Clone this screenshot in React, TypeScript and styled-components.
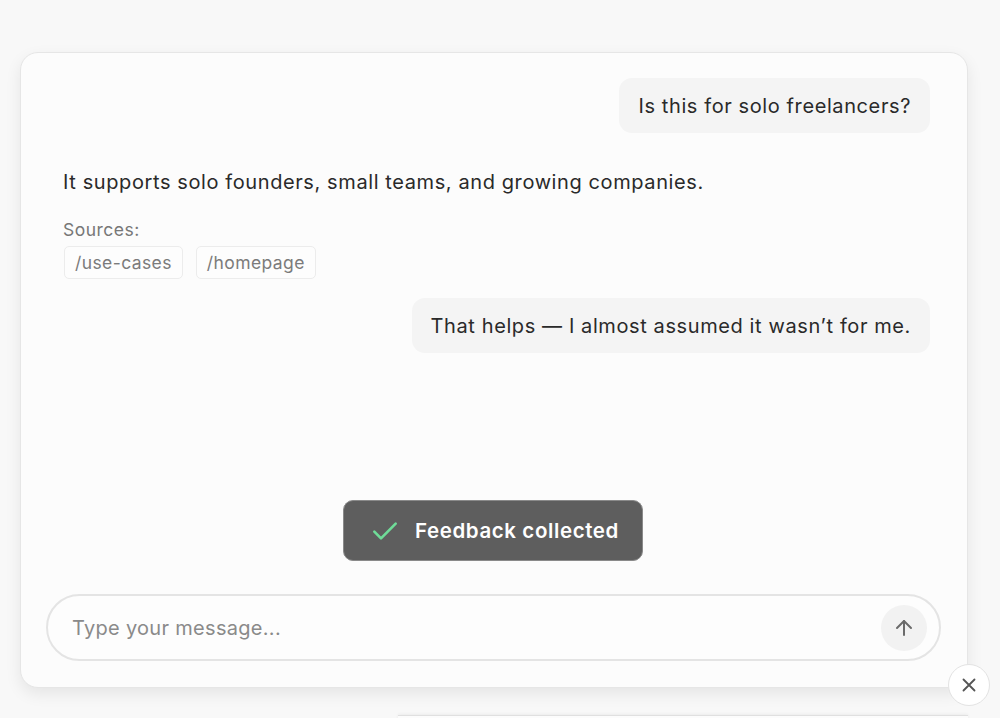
import styled, { createGlobalStyle } from 'styled-components';

const GlobalStyle = createGlobalStyle`
  html, body {
    margin: 0;
    padding: 0;
    background: #f8f8f8;
    font-family: Inter, "Liberation Sans", sans-serif;
    color: #2a2a2a;
    overflow: hidden;
  }
  * { box-sizing: border-box; }
`;

type Message =
  | { role: 'user'; text: string }
  | { role: 'assistant'; text: string; sources: string[] };

const messages: Message[] = [
  { role: 'user', text: 'Is this for solo freelancers?' },
  {
    role: 'assistant',
    text: 'It supports solo founders, small teams, and growing companies.',
    sources: ['/use-cases', '/homepage'],
  },
  { role: 'user', text: 'That helps \u2014 I almost assumed it wasn\u2019t for me.' },
];

const CheckIcon = () => (
  <svg width="32" height="32" viewBox="0 0 24 24" fill="none" stroke="#6fdc98" strokeWidth="2" strokeLinecap="round" strokeLinejoin="round">
    <path d="M4 12.5l5 5L20 6.5" />
  </svg>
);

const ArrowUpIcon = () => (
  <svg width="24" height="24" viewBox="0 0 24 24" fill="none" stroke="#6b6b6b" strokeWidth="2" strokeLinecap="round" strokeLinejoin="round">
    <path d="M12 19V5" />
    <path d="M5 12l7-7 7 7" />
  </svg>
);

const CloseIcon = () => (
  <svg width="22" height="22" viewBox="0 0 24 24" fill="none" stroke="#555" strokeWidth="2" strokeLinecap="round">
    <path d="M6 6l12 12M18 6L6 18" />
  </svg>
);

const App = () => (
  <>
    <GlobalStyle />
    <Page>
      <Widget>
        <Thread>
          {messages.map((m, i) =>
            m.role === 'user' ? (
              <UserRow key={i} $gapTop={i === 0 ? 0 : 19}>
                <UserBubble>{m.text}</UserBubble>
              </UserRow>
            ) : (
              <AssistantBlock key={i}>
                <AssistantText>{m.text}</AssistantText>
                <SourcesLabel>Sources:</SourcesLabel>
                <Chips>
                  {m.sources.map((s) => (
                    <Chip key={s}>{s}</Chip>
                  ))}
                </Chips>
              </AssistantBlock>
            ),
          )}
        </Thread>
        <ToastRow>
          <Toast>
            <CheckIcon />
            Feedback collected
          </Toast>
        </ToastRow>
        <Composer>
          <ComposerInput placeholder="Type your message..." />
          <SendButton type="button" aria-label="Send">
            <ArrowUpIcon />
          </SendButton>
        </Composer>
        <CloseButton type="button" aria-label="Close">
          <CloseIcon />
        </CloseButton>
      </Widget>
      <NextPanel />
    </Page>
  </>
);

export default App;

const Page = styled('div')`
  width: 1000px;
  height: 718px;
  padding: 52px 0 0 20px;
  position: relative;
  overflow: hidden;
`;

const Widget = styled('div')`
  position: relative;
  width: 948px;
  height: 636px;
  background: #fcfcfc;
  border: 1.5px solid #e6e6e6;
  border-radius: 18px;
  box-shadow: 0 6px 16px rgba(0, 0, 0, 0.08);
  display: flex;
  flex-direction: column;
  padding: 25px 26px 26px 25px;
`;

const Thread = styled('div')`
  display: flex;
  flex-direction: column;
  padding: 0 11px 0 17px;
  flex-grow: 1;
`;

const UserRow = styled('div')<{ $gapTop: number }>`
  display: flex;
  justify-content: flex-end;
  margin-top: ${({ $gapTop }) => $gapTop}px;
`;

const UserBubble = styled('div')`
  background: #f4f4f4;
  border-radius: 13px;
  padding: 14px 19px 13px 19px;
  font-size: 20px;
  letter-spacing: 0.6px;
  line-height: 28px;
  color: #2a2a2a;
`;

const AssistantBlock = styled('div')`
  display: flex;
  flex-direction: column;
  padding-top: 35px;
`;

const AssistantText = styled('div')`
  font-size: 20px;
  letter-spacing: 0.6px;
  line-height: 28px;
  color: #2a2a2a;
`;

const SourcesLabel = styled('div')`
  margin-top: 24px;
  font-size: 17.5px;
  letter-spacing: 0.5px;
  line-height: 20px;
  color: #777;
`;

const Chips = styled('div')`
  display: flex;
  gap: 13px;
  margin-top: 6px;
  padding-left: 1px;
`;

const Chip = styled('div')`
  border: 1px solid #ececec;
  border-radius: 5px;
  background: #fdfdfd;
  padding: 4px 10px;
  font-size: 17.5px;
  letter-spacing: 0.4px;
  line-height: 23px;
  color: #7b7b7b;
`;

const ToastRow = styled('div')`
  display: flex;
  padding-left: 297px;
  margin-bottom: 33px;
`;

const Toast = styled('div')`
  display: flex;
  align-items: center;
  gap: 14px;
  width: 300px;
  height: 61px;
  padding-left: 25px;
  background: #5e5e5e;
  border: 1.5px solid #8a8a8a;
  border-radius: 10px;
  color: #fff;
  font-size: 20.5px;
  letter-spacing: 0.6px;
  font-weight: 600;
`;

const Composer = styled('div')`
  display: flex;
  align-items: center;
  height: 67px;
  border: 2px solid #e4e4e4;
  border-radius: 34px;
  background: #fdfdfd;
  padding: 0 12px 0 22px;
`;

const ComposerInput = styled('input')`
  flex-grow: 1;
  border: none;
  outline: none;
  background: transparent;
  font-family: inherit;
  font-size: 20px;
  letter-spacing: 0.3px;
  color: #2a2a2a;
  &::placeholder {
    color: #8a8a8a;
  }
`;

const SendButton = styled('button')`
  width: 46px;
  height: 46px;
  border-radius: 50%;
  border: none;
  background: #f2f2f2;
  display: flex;
  align-items: center;
  justify-content: center;
  padding: 0;
`;

const CloseButton = styled('button')`
  position: absolute;
  right: -23px;
  bottom: -19px;
  width: 42px;
  height: 42px;
  border-radius: 50%;
  border: 1px solid #e3e3e3;
  background: #fff;
  display: flex;
  align-items: center;
  justify-content: center;
  padding: 0;
`;

const NextPanel = styled('div')`
  position: absolute;
  left: 398px;
  top: 715px;
  width: 570px;
  height: 20px;
  border-top: 1px solid #e0e0e0;
  background: #fcfcfc;
  box-shadow: 0 -1px 3px rgba(0, 0, 0, 0.05);
`;
